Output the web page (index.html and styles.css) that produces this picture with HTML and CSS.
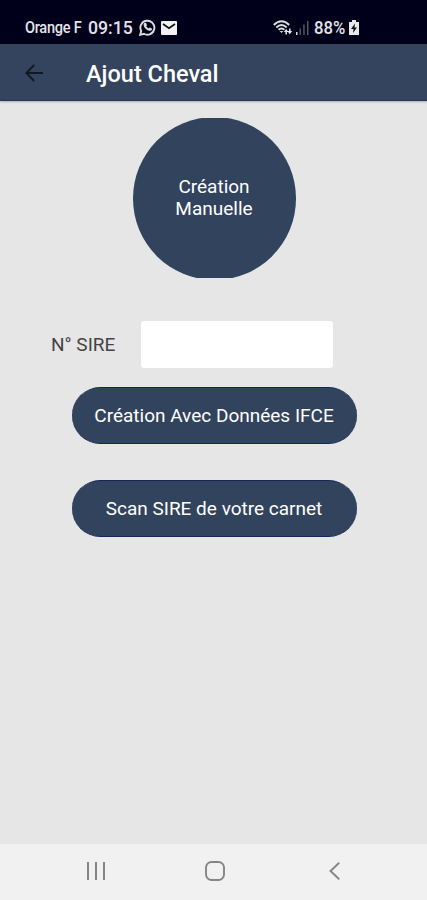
FILE: index.html
```html
<!DOCTYPE html>
<html lang="fr">
<head>
    <meta charset="UTF-8">
    <meta name="viewport" content="width=device-width, initial-scale=1.0">
    <title>Ajout Cheval</title>
    <link rel="stylesheet" href="styles.css">
</head>
<body>
    <div class="status-bar">
        <span class="carrier">Orange F</span>
        <span class="time">09:15</span>
        <svg class="whatsapp" width="17" height="17" viewBox="0 0 17 17" fill="none">
            <path d="M1.2 15.8l1-3.8a7 7 0 1 1 2.7 2.8z" stroke="#ddd" stroke-width="1.9"/>
            <path d="M5.4 4l1.6-.2 1 2.4-.8 1.1c.6 1 1.400 1.800 2.500 2.300l1.100-1 2.300 1.200c-.1 1.700-1.500 2.300-2.900 2-3-.7-5.200-3.100-5.600-5.700-.1-.9.200-1.600.8-2.100z" fill="#ddd"/>
        </svg>
        <svg class="mail" width="16" height="14" viewBox="0 0 16 14">
            <rect width="16" height="14" rx="1" fill="#f2f2f2"/>
            <path d="M2 3l6 4.300L14 3" fill="none" stroke="#111" stroke-width="1.700"/>
        </svg>
        <svg class="wifi" width="20" height="16" viewBox="0 0 20 16" fill="none" stroke="#ddd">
            <path d="M.8 5Q8.500-2.500 16.200 5M3.300 7.500Q8.500 2.500 13.700 7.500M5.600 9.800Q8.500 7.200 11.400 9.800" stroke-width="1.900"/>
            <path d="M6.700 11h3.600l-1.800 2z" fill="#ddd" stroke="none"/>
            <path d="M10.800 12l2.400-3 2.300 3zM14.300 11h4.900l-2.400 3.200z" fill="#eee" stroke="none"/>
            <path d="M13.200 11v3.500M16.800 8.500v3" stroke-width="1.600"/>
        </svg>
        <svg class="signal" width="13" height="15" viewBox="0 0 13 15">
            <path d="M0 12h1.500v3H0z" fill="#ddd"/>
            <path d="M3.500 8.500H5V15H3.500zM7.200 4.500h1.500V15H7.200zM11 1h1.500v14H11z" fill="#555560"/>
        </svg>
        <span class="percent">88%</span>
        <svg class="battery" width="10" height="15" viewBox="0 0 10 15">
            <path d="M3 0h4v2h3v13H0V2h3z" fill="#e8e8e8"/>
            <path d="M6 3.500L2 9h2.500L4 13l4-5.500H5.500z" fill="#111"/>
        </svg>
    </div>

    <header class="app-bar">
        <svg class="back" width="18" height="18" viewBox="0 0 18 18" fill="none" stroke="#101820" stroke-width="1.800">
            <path d="M18 9H1.300M9.200 1L1.300 9l7.900 8"/>
        </svg>
        <h1>Ajout Cheval</h1>
    </header>

    <main class="content">
        <div class="circle-wrap">
            <button class="circle-btn">Création<br>Manuelle</button>
        </div>
        <div class="field">
            <label for="sire">N° SIRE</label>
            <input type="text" id="sire">
        </div>
        <button class="pill-btn">Création Avec Données IFCE</button>
        <button class="pill-btn">Scan SIRE de votre carnet</button>
    </main>

    <nav class="nav-bar">
        <svg class="recents" width="18" height="18" viewBox="0 0 18 18" stroke="#858585" stroke-width="2">
            <path d="M1 0v18M9 0v18M17 0v18"/>
        </svg>
        <svg class="home" width="20" height="20" viewBox="0 0 20 20" fill="none" stroke="#858585" stroke-width="1.900">
            <rect x="1" y="1" width="18" height="18" rx="5.500"/>
        </svg>
        <svg class="nav-back" width="11" height="18" viewBox="0 0 11 18" fill="none" stroke="#858585" stroke-width="1.900">
            <path d="M10.200.7L1.500 9l8.700 8.300"/>
        </svg>
    </nav>
</body>
</html>
```

FILE: styles.css
```css
/* Basic reset */
* {
    margin: 0;
    padding: 0;
    box-sizing: border-box;
}

body {
    font-family: Roboto, "Liberation Sans", sans-serif;
    background-color: #e6e6e6;
    display: flex;
    flex-direction: column;
    height: 100vh;
    overflow: hidden;
}

svg {
    display: block;
    flex-shrink: 0;
}

/* Phone status bar */
.status-bar {
    display: flex;
    align-items: center;
    height: 44px;
    padding: 11px 0 0 25px;
    background-color: #00001a;
    color: #e4e4e8;
    font-weight: 500;
    white-space: nowrap;
    flex-shrink: 0;
}

.carrier {
    width: 63px;
    font-size: 16px;
    letter-spacing: -0.3px;
    transform: scaleX(0.91);
    transform-origin: left;
}

.time {
    width: 51px;
    font-size: 18px;
    transform: scaleX(0.98);
    transform-origin: left;
}

.mail {
    margin-left: 5px;
}

.wifi {
    margin-left: 96px;
}

.signal {
    margin-left: 3px;
}

.percent {
    width: 34px;
    margin-left: 5px;
    font-size: 18px;
    transform: scaleX(0.93);
    transform-origin: left;
}

.battery {
    margin-left: 1px;
}

/* Title bar */
.app-bar {
    display: flex;
    align-items: center;
    height: 57px;
    padding: 2px 0 0 25px;
    background-color: #34445e;
    border-bottom: 1px solid #203652;
    box-shadow: 0 1px 2px rgba(0, 0, 0, 0.25);
    flex-shrink: 0;
}

.app-bar h1 {
    margin: 2px 0 0 43px;
    font-size: 23.5px;
    font-weight: 500;
    color: #fff;
}

/* Page content */
.content {
    flex: 1;
    display: flex;
    flex-direction: column;
    align-items: center;
    padding-top: 17px;
}

button {
    font-family: inherit;
    font-size: 19px;
    color: #fff;
    background-color: #32435d;
    border: none;
    cursor: pointer;
}

/* The round button is slightly cut at the top and bottom */
.circle-wrap {
    display: flex;
    align-items: center;
    height: 160px;
    margin-left: 1px;
    overflow: hidden;
}

.circle-btn {
    width: 163px;
    height: 163px;
    border-radius: 50%;
    line-height: 22px;
    flex-shrink: 0;
}

.field {
    display: flex;
    align-items: center;
    align-self: flex-start;
    margin: 43px 0 19px 51px;
}

.field label {
    width: 90px;
    font-size: 19px;
    color: #444;
}

.field input {
    width: 192px;
    height: 47px;
    padding: 0 10px;
    font-size: 18px;
    background-color: #fff;
    border: none;
    border-radius: 3px;
}

.pill-btn {
    width: 285px;
    height: 57px;
    margin: 0 0 36px 1px;
    border-radius: 29px;
    border-top: 1px solid #132857;
    border-bottom: 1px solid #132857;
    white-space: nowrap;
}

/* Phone navigation bar */
.nav-bar {
    display: flex;
    align-items: center;
    height: 56px;
    padding: 0 0 2px 87px;
    background-color: #f1f1f1;
    flex-shrink: 0;
}

.home {
    margin-left: 100px;
}

.nav-back {
    margin-left: 104px;
}
```
